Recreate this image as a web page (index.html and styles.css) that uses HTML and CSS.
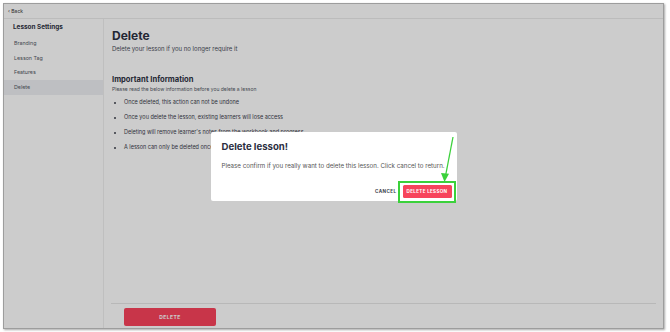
FILE: index.html
```html
<!DOCTYPE html>
<html>
<head>
<meta charset="utf-8">
<link rel="stylesheet" href="styles.css">
</head>
<body>
<div class="window">
  <div class="topbar"><span class="back">‹ Back</span></div>
  <div class="layout">
    <aside class="sidebar">
      <div class="side-title">Lesson Settings</div>
      <div class="side-item">Branding</div>
      <div class="side-item">Lesson Tag</div>
      <div class="side-item">Features</div>
      <div class="side-item active">Delete</div>
    </aside>
    <main class="main">
      <div class="main-body">
        <h1 class="title">Delete</h1>
        <p class="subtitle">Delete your lesson if you no longer require it</p>
        <h2 class="info-title">Important Information</h2>
        <p class="info-sub">Please read the below information before you delete a lesson</p>
        <ul class="bullets">
          <li>Once deleted, this action can not be undone</li>
          <li>Once you delete the lesson, existing learners will lose access</li>
          <li>Deleting will remove learner's notes from the workbook and progress</li>
          <li>A lesson can only be deleted once all enrolled learners have been removed</li>
        </ul>
      </div>
      <div class="footer">
        <button class="btn-delete">DELETE</button>
      </div>
    </main>
  </div>
  <div class="overlay">
    <div class="modal">
      <h3 class="modal-title">Delete lesson!</h3>
      <p class="modal-text">Please confirm if you really want to delete this lesson. Click cancel to return.</p>
      <div class="modal-actions">
        <button class="btn-cancel">CANCEL</button>
        <div class="highlight-wrap">
          <button class="btn-confirm">DELETE LESSON</button>
          <span class="highlight"></span>
          <svg class="arrow" width="20" height="50" viewBox="0 0 20 50">
            <line x1="15" y1="1" x2="7.5" y2="40" stroke="#3bd13b" stroke-width="1.3"/>
            <path d="M3 37 L6.5 46 L11 37.8 Z" fill="#3bd13b"/>
          </svg>
        </div>
      </div>
    </div>
  </div>
</div>
</body>
</html>
```
FILE: styles.css
```css
* { box-sizing: border-box; }
html, body { margin: 0; padding: 0; background: #ffffff; }
body {
  font-family: Inter, "DejaVu Sans", sans-serif;
  color: #2d3142;
  width: 670px;
  height: 332px;
  overflow: hidden;
}
.window {
  position: relative;
  margin: 3px 0 0 3px;
  width: 661px;
  height: 326px;
  border: 1px solid #9d9d9d;
  box-shadow: 1px 1px 2px rgba(0,0,0,0.35);
  background: #ffffff;
  display: flex;
  flex-direction: column;
  overflow: hidden;
}
.topbar {
  height: 15px;
  border-bottom: 1px solid #ececec;
  display: flex;
  align-items: center;
  padding-left: 4px;
  flex: none;
}
.back { font-size: 5px; color: #333; }
.layout { flex: 1; display: flex; min-height: 0; }
.sidebar {
  width: 100px;
  border-right: 1px solid #efefef;
  padding-top: 2px;
  flex: none;
}
.side-title {
  font-size: 6.4px;
  font-weight: 700;
  padding: 0 9px;
  height: 13px;
  line-height: 13px;
  color: #2d3142;
}
.side-item {
  font-size: 5.3px;
  color: #555a66;
  padding: 0 10px;
  height: 14.7px;
  line-height: 14.7px;
}
.side-title + .side-item { margin-top: 2px; }
.side-item.active { background: #eeeff3; }
.main { flex: 1; display: flex; flex-direction: column; }
.main-body { flex: 1; padding: 9px 0 0 8px; }
.title {
  margin: 0;
  font-size: 12px;
  font-weight: 700;
  line-height: 16px;
  color: #2d3142;
}
.subtitle {
  margin: 1px 0 0;
  font-size: 6px;
  line-height: 8px;
  color: #4a4e5a;
}
.info-title {
  margin: 22px 0 0;
  font-size: 7.6px;
  font-weight: 700;
  line-height: 10px;
  color: #2d3142;
}
.info-sub {
  margin: 0;
  font-size: 5px;
  line-height: 8px;
  color: #555a66;
}
.bullets {
  margin: 6px 0 0;
  padding-left: 12px;
  font-size: 5.5px;
  color: #3d414d;
}
.bullets li { line-height: 7px; margin-bottom: 8px; }
.footer {
  margin: 0 7px 0 7px;
  border-top: 1px solid #e6e6e6;
  padding: 4px 0 2px 13px;
  flex: none;
}
.btn-delete {
  display: block;
  width: 92px;
  height: 18px;
  border: none;
  border-radius: 2px;
  background: #fb435c;
  color: #fff;
  font-family: inherit;
  font-size: 5px;
  font-weight: 700;
  letter-spacing: 0.4px;
}
.overlay {
  position: absolute;
  inset: 0;
  background: rgba(0,0,0,0.2);
  display: flex;
  align-items: center;
  justify-content: center;
}
.modal {
  width: 246px;
  height: 69px;
  background: #fff;
  border-radius: 2px;
  padding: 9px 5px 3px 11px;
  display: flex;
  flex-direction: column;
}
.modal-title {
  margin: 0;
  font-size: 9.6px;
  font-weight: 700;
  line-height: 12px;
  color: #2b2e3f;
}
.modal-text {
  margin: 9px 0 0;
  font-size: 6.2px;
  line-height: 8px;
  color: #555;
  white-space: nowrap;
}
.modal-actions {
  margin-top: auto;
  display: flex;
  justify-content: flex-end;
  align-items: center;
  gap: 6px;
}
.btn-cancel {
  border: none;
  background: none;
  padding: 0;
  font-family: inherit;
  font-size: 4.6px;
  font-weight: 700;
  letter-spacing: 0.4px;
  color: #3a3d4a;
}
.highlight-wrap { position: relative; }
.btn-confirm {
  display: block;
  width: 49px;
  height: 13px;
  border: none;
  border-radius: 1.5px;
  background: #f7445c;
  color: #fff;
  font-family: inherit;
  font-size: 4.6px;
  font-weight: 700;
  letter-spacing: 0.3px;
  padding: 0;
}
.highlight {
  position: absolute;
  left: -5px;
  top: -4px;
  right: -4px;
  bottom: -5px;
  border: 2px solid #3bd13b;
}
.arrow {
  position: absolute;
  left: 35px;
  top: -49px;
}
```
